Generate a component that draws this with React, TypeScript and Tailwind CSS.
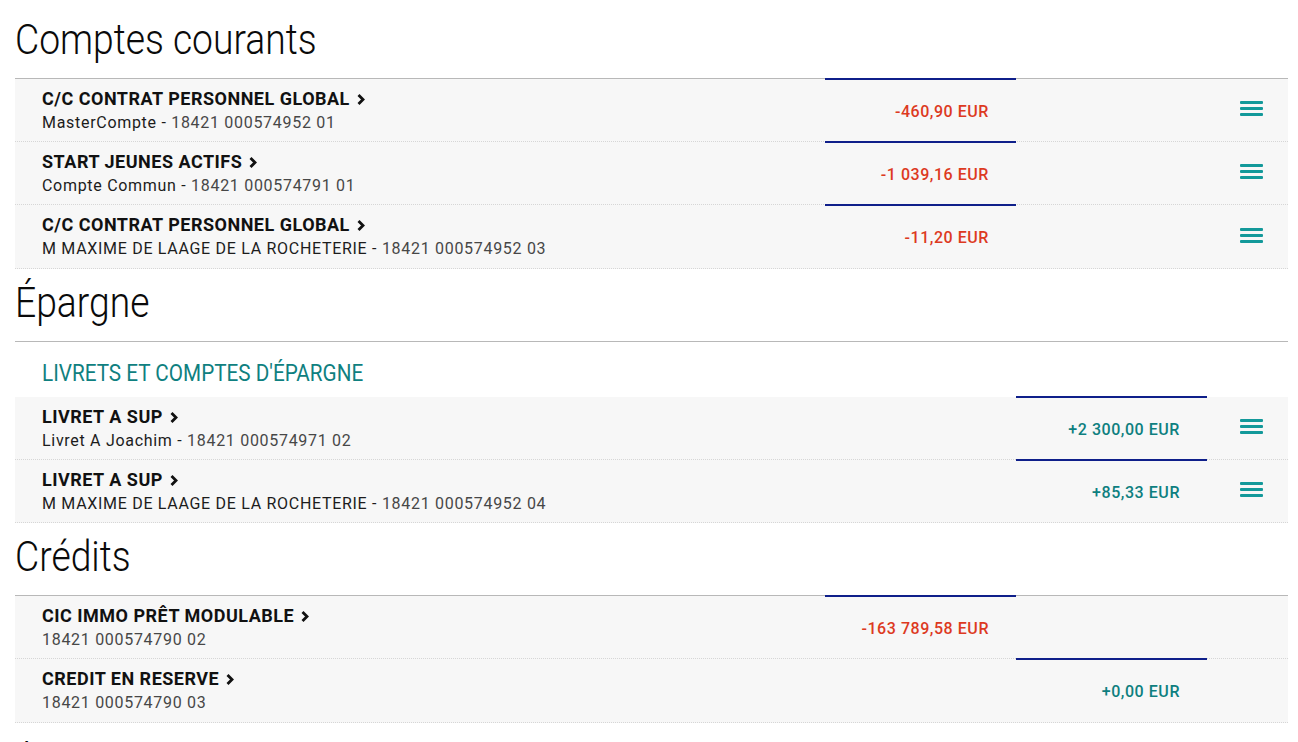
import React from "react";

type Row = {
  name: string;
  owner?: string;
  number: string;
  amount: string;
  col: 1 | 2;
  negative: boolean;
  menu: boolean;
};

const Chevron = () => (
  <svg width="10" height="13" viewBox="0 0 10 13" className="ml-[6px] inline-block" aria-hidden>
    <polyline points="2.5,2 7,6.5 2.5,11" fill="none" stroke="#111" strokeWidth="2.8" strokeLinecap="butt" strokeLinejoin="miter" />
  </svg>
);

const MenuIcon = () => (
  <div className="flex w-[23px] flex-col gap-[3px]">
    <div className="h-[3px] w-full rounded-[1px] bg-[#13999a]" />
    <div className="h-[3px] w-full rounded-[1px] bg-[#13999a]" />
    <div className="h-[3px] w-full rounded-[1px] bg-[#13999a]" />
  </div>
);

const AmountCell = ({ row, col }: { row: Row; col: 1 | 2 }) => {
  const show = row.col === col;
  return (
    <div className="relative flex w-[191px] shrink-0 items-center justify-end pr-[27px] pt-[3px]">
      {show && (
        <>
          <div className="absolute -top-px left-0 right-0 h-[2px] bg-[#0f1f8a]" />
          <span
            className={
              "text-[16px] font-medium leading-none tracking-[0.55px] " +
              (row.negative ? "text-[#dd3a1f]" : "text-[#0e7f7f]")
            }
          >
            {row.amount}
          </span>
        </>
      )}
    </div>
  );
};

const AccountRow = ({ row, last }: { row: Row; last?: boolean }) => (
  <div
    className={
      "flex border-b border-dotted border-[#d6d6d6] bg-[#f7f7f7] " + (last ? "h-[64px]" : "h-[63px]")
    }
  >
    <div className="flex min-w-0 flex-1 flex-col pl-[27px] pt-[8px]">
      <div className="flex items-center text-[18px] font-bold leading-[24px] tracking-[0.5px] text-[#111111]">
        <span>{row.name}</span>
        <Chevron />
      </div>
      <div className="text-[16px] leading-[24px] tracking-[0.7px]">
        {row.owner && <span className="text-[#1c1c1c]">{row.owner} - </span>}
        <span className="text-[#474747]">{row.number}</span>
      </div>
    </div>
    <AmountCell row={row} col={1} />
    <AmountCell row={row} col={2} />
    <div className="flex w-[81px] shrink-0 items-center pb-[3px] pl-[33px]">
      {row.menu && <MenuIcon />}
    </div>
  </div>
);

const Heading = ({ title, first }: { title: string; first?: boolean }) => (
  <div
    className={
      "flex items-end border-b border-[#b8b8b8] pb-[17px] " + (first ? "h-[79px]" : "h-[73px]")
    }
  >
    <h2 className="inline-block origin-left scale-x-[0.866] whitespace-nowrap text-[43px] font-light leading-none text-[#0a0a0a]">
      {title}
    </h2>
  </div>
);

const courants: Row[] = [
  { name: "C/C CONTRAT PERSONNEL GLOBAL", owner: "MasterCompte", number: "18421 000574952 01", amount: "-460,90 EUR", col: 1, negative: true, menu: true },
  { name: "START JEUNES ACTIFS", owner: "Compte Commun", number: "18421 000574791 01", amount: "-1 039,16 EUR", col: 1, negative: true, menu: true },
  { name: "C/C CONTRAT PERSONNEL GLOBAL", owner: "M MAXIME DE LAAGE DE LA ROCHETERIE", number: "18421 000574952 03", amount: "-11,20 EUR", col: 1, negative: true, menu: true },
];

const epargne: Row[] = [
  { name: "LIVRET A SUP", owner: "Livret A Joachim", number: "18421 000574971 02", amount: "+2 300,00 EUR", col: 2, negative: false, menu: true },
  { name: "LIVRET A SUP", owner: "M MAXIME DE LAAGE DE LA ROCHETERIE", number: "18421 000574952 04", amount: "+85,33 EUR", col: 2, negative: false, menu: true },
];

const credits: Row[] = [
  { name: "CIC IMMO PRÊT MODULABLE", number: "18421 000574790 02", amount: "-163 789,58 EUR", col: 1, negative: true, menu: false },
  { name: "CREDIT EN RESERVE", number: "18421 000574790 03", amount: "+0,00 EUR", col: 2, negative: false, menu: false },
];

export default function App() {
  return (
    <div
      className="min-h-screen bg-white pl-[15px] pr-[10px]"
      style={{ fontFamily: "Roboto, 'Noto Sans', sans-serif" }}
    >
      <section>
        <Heading title="Comptes courants" first />
        {courants.map((r, i) => (
          <AccountRow key={i} row={r} last={i === courants.length - 1} />
        ))}
      </section>
      <section>
        <Heading title="Épargne" />
        <div className="flex h-[55px] items-end pb-[12px] pl-[27px]">
          <span className="inline-block origin-left scale-x-[0.9] whitespace-nowrap text-[23px] font-normal leading-none text-[#0f8080]">
            LIVRETS ET COMPTES D'ÉPARGNE
          </span>
        </div>
        {epargne.map((r, i) => (
          <AccountRow key={i} row={r} />
        ))}
      </section>
      <section>
        <Heading title="Crédits" />
        {credits.map((r, i) => (
          <AccountRow key={i} row={r} last={i === credits.length - 1} />
        ))}
      </section>
      <section>
        <Heading title="Assurances" />
      </section>
    </div>
  );
}
